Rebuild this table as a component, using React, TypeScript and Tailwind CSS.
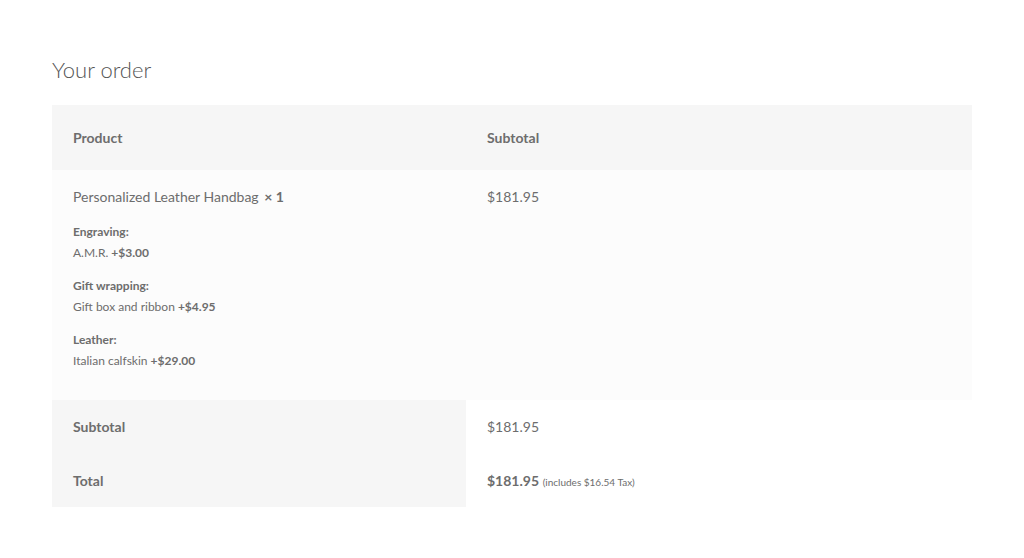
import React from "react";

const meta = [
  { label: "Engraving:", value: "A.M.R.", price: "+$3.00" },
  { label: "Gift wrapping:", value: "Gift box and ribbon", price: "+$4.95" },
  { label: "Leather:", value: "Italian calfskin", price: "+$29.00" },
];

const App = () => {
  return (
    <div className="min-h-[558px] w-[1024px] bg-white font-['Lato',sans-serif] text-[#6d6d6d]">
      <div className="pl-[52px] pr-[52px] pt-[56px]">
        <h3 className="text-[22px] font-light leading-[28px] text-[#555555]">Your order</h3>

        <table className="mt-[21px] w-[920px] border-collapse text-left">
          <thead>
            <tr className="bg-[#f6f6f6]">
              <th className="w-[414px] px-[21px] py-[22px] text-[14px] font-bold leading-[21px]">Product</th>
              <th className="px-[21px] py-[22px] text-[14px] font-bold leading-[21px]">Subtotal</th>
            </tr>
          </thead>
          <tbody>
            <tr className="bg-[#fcfcfc] align-top">
              <td className="px-[21px] pt-[16px] pb-[29px]">
                <div className="text-[14px] leading-[21px]">
                  Personalized Leather Handbag <strong className="ml-[2px] font-bold">× 1</strong>
                </div>
                <dl className="mt-[14px] flex flex-col gap-[12px] text-[12px] leading-[21px]">
                  {meta.map((m) => (
                    <div key={m.label}>
                      <dt className="font-bold">{m.label}</dt>
                      <dd>
                        {m.value} <span className="font-bold">{m.price}</span>
                      </dd>
                    </div>
                  ))}
                </dl>
              </td>
              <td className="px-[21px] pt-[16px] text-[14px] leading-[21px]">$181.95</td>
            </tr>
          </tbody>
          <tfoot>
            <tr>
              <th className="h-[53px] bg-[#f6f6f6] px-[21px] py-0 text-[14px] font-bold leading-[21px]">Subtotal</th>
              <td className="h-[53px] px-[21px] py-0 text-[14px] leading-[21px]">$181.95</td>
            </tr>
            <tr>
              <th className="h-[54px] bg-[#f6f6f6] px-[21px] py-0 text-[14px] font-bold leading-[21px]">Total</th>
              <td className="h-[54px] px-[21px] py-0 text-[14px] leading-[21px]">
                <strong className="font-bold">$181.95</strong>{" "}
                <small className="text-[10px] leading-none">(includes $16.54 Tax)</small>
              </td>
            </tr>
          </tfoot>
        </table>
      </div>
    </div>
  );
};

export default App;
